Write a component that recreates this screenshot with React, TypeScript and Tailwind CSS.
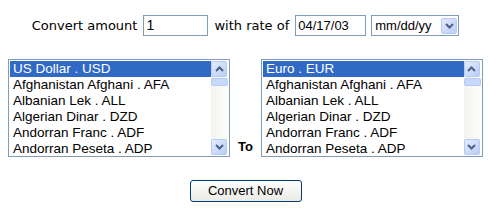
import React from "react";

const currencies = [
  "Afghanistan Afghani . AFA",
  "Albanian Lek . ALL",
  "Algerian Dinar . DZD",
  "Andorran Franc . ADF",
  "Andorran Peseta . ADP",
];

function Chevron({ up }: { up?: boolean }) {
  return (
    <svg width="9" height="6" viewBox="0 0 9 6">
      <path
        d={up ? "M1 5 L4.5 1.5 L8 5" : "M1 1 L4.5 4.5 L8 1"}
        fill="none"
        stroke="#4d6185"
        strokeWidth="2"
      />
    </svg>
  );
}

function ScrollButton({ up }: { up?: boolean }) {
  return (
    <div className="w-[16px] h-[16px] flex items-center justify-center rounded-[2px] border border-[#b7c9f4] bg-gradient-to-br from-[#e4ecfd] to-[#b9cdf9]">
      <Chevron up={up} />
    </div>
  );
}

function ListBox({ selected }: { selected: string }) {
  return (
    <div className="w-[222px] h-[98px] border border-[#7f9db9] bg-white p-[1px] flex">
      <div className="flex-1 flex flex-col text-[13.5px] leading-[16px] text-black">
        <div className="bg-[#316ac5] text-white pl-[3px] h-[16px]">{selected}</div>
        {currencies.map((c) => (
          <div key={c} className="pl-[3px] h-[16px]">
            {c}
          </div>
        ))}
      </div>
      <div className="w-[17px] flex flex-col bg-gradient-to-r from-[#f3f3ef] to-[#fdfdfa]">
        <ScrollButton up />
        <div className="h-[8px] mt-[1px] rounded-[2px] border border-[#b7c9f4] bg-[#c8d8fb]" />
        <div className="flex-1" />
        <ScrollButton />
      </div>
    </div>
  );
}

export default function App() {
  return (
    <div className="w-[491px] h-[217px] bg-white font-['Liberation_Sans',Arial,sans-serif]">
      <div className="flex items-center justify-center pt-[15px] h-[36px] text-[13px]">
        <span className="font-['DejaVu_Sans',Verdana,sans-serif] text-[13px] mr-[6px]">
          Convert amount
        </span>
        <div className="w-[65px] h-[21px] border border-[#7f9db9] pl-[2px] leading-[19px] text-[14px]">
          1
        </div>
        <span className="font-['DejaVu_Sans',Verdana,sans-serif] text-[13px] ml-[6px] mr-[6px]">
          with rate of
        </span>
        <div className="w-[71px] h-[21px] border border-[#7f9db9] pl-[2px] leading-[19px] text-[13px]">
          04/17/03
        </div>
        <div className="ml-[5px] w-[88px] h-[21px] border border-[#7f9db9] flex items-center pl-[3px] pr-[1px] text-[13px]">
          <span className="flex-1">mm/dd/yy</span>
          <ScrollButton />
        </div>
      </div>
      <div className="flex items-end justify-center mt-[23px]">
        <ListBox selected="US Dollar . USD" />
        <span className="font-bold text-[13px] mx-[8px] mb-[1px]">To</span>
        <ListBox selected="Euro . EUR" />
      </div>
      <div className="flex justify-center mt-[23px]">
        <button className="w-[112px] h-[22px] rounded-[3px] border border-[#003c74] bg-gradient-to-b from-[#fefefe] to-[#ebebe4] text-[13px] text-black">
          Convert Now
        </button>
      </div>
    </div>
  );
}
